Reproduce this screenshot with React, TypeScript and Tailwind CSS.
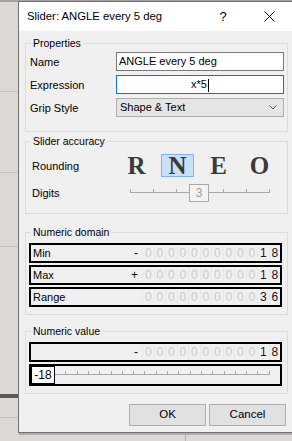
import React from "react";

type GroupBoxProps = {
  title: string;
  className: string;
  children: React.ReactNode;
};

function GroupBox({ title, className, children }: GroupBoxProps) {
  return (
    <div className={`relative w-[263px] border border-[#dcdcdc] ${className}`}>
      <span className="absolute -top-[8px] left-[5px] bg-[#f0f0f0] px-[2px] text-[10.5px] leading-[14px] text-black">
        {title}
      </span>
      {children}
    </div>
  );
}

function Digits({ sign, value }: { sign: string; value: string }) {
  const first = value.search(/[1-9]/);
  return (
    <div className="flex h-full items-center">
      <span className="w-[12px] pr-[4px] text-right text-[12px] leading-none text-[#111]">
        {sign}
      </span>
      <div className="flex h-full">
        {value.split("").map((d, i) => (
          <span
            key={i}
            className={`flex h-full w-[11.5px] items-center justify-center border-l border-[#e8e8e8] text-[12px] leading-none ${
              first === -1 || i < first ? "text-[#cacaca]" : "text-[#161616]"
            }`}
          >
            {d}
          </span>
        ))}
      </div>
    </div>
  );
}

function DigitRow({ label, sign, value }: { label: string; sign: string; value: string }) {
  return (
    <div className="flex h-[20px] w-[253px] items-center border-2 border-black">
      <span className="flex-1 pl-[2px] text-[11px] leading-none">{label}</span>
      <Digits sign={sign} value={value} />
    </div>
  );
}

function Ticks({ width, start, step, count, line }: { width: number; start: number; step: number; count: number; line: [number, number] }) {
  const ticks = Array.from({ length: count }, (_, i) => start + i * step);
  return (
    <svg width={width} height={18} className="block">
      <line x1={line[0]} y1={8.5} x2={line[1]} y2={8.5} stroke="#a8a8a8" strokeWidth={1} />
      {ticks.map((x, i) => (
        <line
          key={i}
          x1={Math.round(x) + 0.5}
          y1={5}
          x2={Math.round(x) + 0.5}
          y2={9}
          stroke="#a8a8a8"
          strokeWidth={1}
        />
      ))}
    </svg>
  );
}

const LETTERS = ["R", "N", "E", "O"];

export default function App() {
  return (
    <div className="relative h-[441px] w-[292px] overflow-hidden bg-[#dcd9d4] font-['Liberation_Sans',Arial,sans-serif] text-black">
      {/* desktop behind the dialog */}
      <div className="absolute left-0 top-0 h-[2px] w-full bg-[#a3a3a3]" />
      <div className="absolute left-0 top-[91px] h-px w-[18px] bg-[#c4c1bc]" />
      <div className="absolute left-0 top-[172px] h-px w-[18px] bg-[#c4c1bc]" />
      <div className="absolute left-0 top-[246px] h-px w-[18px] bg-[#c4c1bc]" />
      <div className="absolute left-0 top-[394px] h-[4px] w-[18px] bg-[#5a5a5a]" />
      <div className="absolute left-0 top-[417px] h-px w-[18px] bg-[#c4c1bc]" />
      <div className="absolute left-[185px] top-[433px] h-[8px] w-px bg-[#b9b6b1]" />
      <div className="absolute left-[19px] top-[433px] h-[2px] w-[274px] bg-[#b0ada8]" />

      <div className="absolute left-[18px] top-[1px] flex h-[432px] w-[276px] flex-col border border-[#6f6f6f] bg-[#f0f0f0]">
        <div className="flex h-[29px] items-center bg-white">
          <span className="flex-1 pl-[8px] text-[11.3px]">Slider: ANGLE every 5 deg</span>
          <span className="flex h-full w-[46px] items-center justify-center text-[13px]">?</span>
          <span className="mr-px flex h-full w-[46px] items-center justify-center">
            <svg width="11" height="11" viewBox="0 0 11 11">
              <path d="M0.5 0.5 L10.5 10.5 M10.5 0.5 L0.5 10.5" stroke="#111" strokeWidth="1" />
            </svg>
          </span>
        </div>

        <div className="flex flex-col pl-[6px]">
          <GroupBox title="Properties" className="mt-[12px] h-[89px]">
            <div className="grid grid-cols-[86px_168px] gap-y-[4px] pl-[4px] pt-[8px] text-[11px]">
              <span className="flex h-[19px] items-center pt-[2px]">Name</span>
              <div className="flex h-[19px] items-center border border-[#7a7a7a] bg-white pl-[2px]">
                ANGLE every 5 deg
              </div>
              <span className="flex h-[19px] items-center pt-[2px]">Expression</span>
              <div className="h-[19px] border border-[#0078d7] bg-white text-center leading-[17px]">
                x*5
                <span className="ml-px inline-block h-[13px] w-px bg-black align-middle" />
              </div>
              <span className="flex h-[19px] items-center pt-[2px]">Grip Style</span>
              <div className="flex h-[19px] items-center justify-between border border-[#adadad] bg-[#e5e5e5] pl-[3px] pr-[6px]">
                <span>Shape &amp; Text</span>
                <svg width="8" height="5" viewBox="0 0 8 5">
                  <path d="M0.5 0.5 L4 4 L7.5 0.5" fill="none" stroke="#555" strokeWidth="1" />
                </svg>
              </div>
            </div>
          </GroupBox>

          <GroupBox title="Slider accuracy" className="mt-[9px] h-[73px]">
            <div className="grid grid-cols-[84px_1fr] pl-[6px] pt-[12px] text-[11px]">
              <span className="flex h-[23px] items-center pt-[2px]">Rounding</span>
              <div className="flex h-[23px]">
                {LETTERS.map((l) => (
                  <div key={l} className="flex w-[41px] items-center justify-center">
                    <span
                      className={`flex h-[23px] w-[33px] items-center justify-center font-['Liberation_Serif',serif] text-[25px] font-bold leading-none text-[#3a3a3a] ${
                        l === "N" ? "border border-[#7eb4ea] bg-[#c9e0f7]" : ""
                      }`}
                    >
                      {l}
                    </span>
                  </div>
                ))}
              </div>
              <span className="mt-[7px] flex h-[18px] items-center">Digits</span>
              <div className="relative ml-[14px] mt-[7px] h-[18px] w-[140px]">
                <Ticks width={140} start={0} step={23.17} count={7} line={[0, 140]} />
                <span className="absolute left-[59px] top-0 flex h-[18px] w-[20px] items-center justify-center border border-[#a8a8a8] bg-[#f4f4f4] text-[12px] text-[#a0a0a0]">
                  3
                </span>
              </div>
            </div>
          </GroupBox>

          <GroupBox title="Numeric domain" className="mt-[18px] h-[83px]">
            <div className="flex flex-col gap-[2px] pl-[3px] pt-[10px]">
              <DigitRow label="Min" sign="-" value="000000000018" />
              <DigitRow label="Max" sign="+" value="000000000018" />
              <DigitRow label="Range" sign="" value="000000000036" />
            </div>
          </GroupBox>

          <GroupBox title="Numeric value" className="mt-[16px] h-[63px]">
            <div className="flex flex-col gap-[2px] pl-[3px] pt-[10px]">
              <DigitRow label="" sign="-" value="000000000018" />
              <div className="flex h-[22px] w-[253px] items-start border-2 border-black">
                <span className="flex h-full w-[24px] items-center justify-center border border-black bg-white text-[12px]">
                  -18
                </span>
                <Ticks width={225} start={10.3} step={11.3} count={19} line={[0, 214]} />
              </div>
            </div>
          </GroupBox>

          <div className="mt-[10px] flex w-[263px] justify-end gap-[3px] pr-[2px]">
            <button className="h-[22px] w-[77px] border border-[#adadad] bg-[#e1e1e1] text-[11.5px]">
              OK
            </button>
            <button className="h-[22px] w-[77px] border border-[#adadad] bg-[#e1e1e1] text-[11.5px]">
              Cancel
            </button>
          </div>
        </div>
      </div>
    </div>
  );
}
